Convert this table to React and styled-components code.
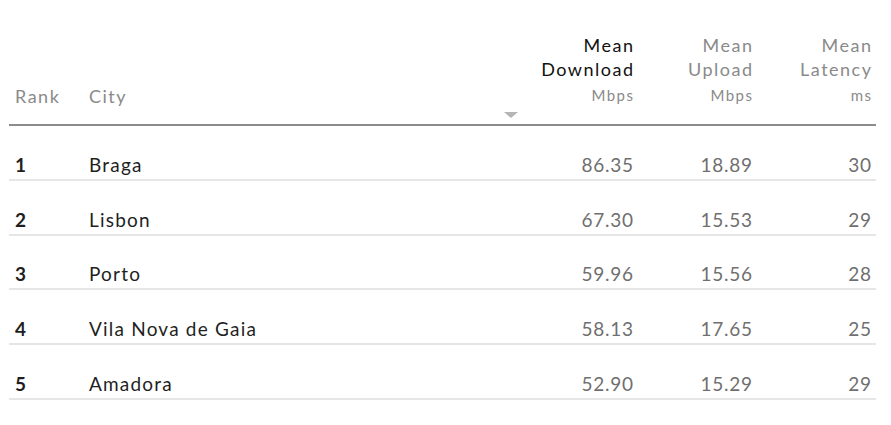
import React from "react";
import styled, { createGlobalStyle } from "styled-components";

const Global = createGlobalStyle`
  html, body { margin: 0; padding: 0; background: #fff; }
  body { font-family: Lato, "Noto Sans", sans-serif; }
`;

const Table = styled.div`
  margin: 0 0 0 9px;
  width: 867px;
  padding-top: 33px;
`;

const Grid = styled.div`
  display: grid;
  grid-template-columns: 80px 1fr 138px 119px 119px;
  align-items: end;
`;

const HeadRow = styled(Grid)`
  border-bottom: 2px solid #8c8c8c;
  padding-bottom: 6px;
`;

const HeadCell = styled.div`
  padding: 0 ${(p) => (p.$right ? "5px" : "0")} 0 ${(p) => (p.$pad ? "6px" : "0")};
  display: flex;
  flex-direction: column;
  align-items: ${(p) => (p.$right ? "flex-end" : "flex-start")};
  text-align: ${(p) => (p.$right ? "right" : "left")};
  color: ${(p) => (p.$active ? "#111" : "#8a8a8a")};
  font-size: 18px;
  line-height: 24px;
  letter-spacing: 1.5px;
`;

const PlainHead = styled(HeadCell)`
  padding-bottom: 10px;
`;

const Title = styled.span`
  display: block;
  margin-right: -1.5px;
`;

const Unit = styled.span`
  display: block;
  font-size: 15px;
  line-height: 20px;
  margin-top: 4px;
  margin-right: -1.5px;
  color: #8a8a8a;
  letter-spacing: 1.5px;
`;

const SortArrow = styled.span`
  align-self: flex-start;
  margin-left: 4px;
  margin-top: 7px;
  width: 0;
  height: 0;
  border-left: 7px solid transparent;
  border-right: 7px solid transparent;
  border-top: 6px solid #b5b5b5;
  visibility: ${(p) => (p.$hidden ? "hidden" : "visible")};
`;

const Row = styled(Grid)`
  height: 54.8px;
  box-sizing: border-box;
  border-bottom: 2px solid #e6e6e6;
  padding-bottom: 2px;
`;

const Cell = styled.div`
  padding: 0 ${(p) => (p.$right ? "5px" : "0")} 0 ${(p) => (p.$pad ? "6px" : "0")};
  text-align: ${(p) => (p.$right ? "right" : "left")};
  font-size: 19px;
  line-height: 24px;
  color: ${(p) => (p.$muted ? "#6f6f6f" : "#1f1f1f")};
  font-weight: ${(p) => (p.$bold ? 700 : 400)};
  letter-spacing: ${(p) => (p.$right ? "0.7px" : "1.2px")};
  margin-right: ${(p) => (p.$right ? "-0.7px" : "0")};
`;

const rows = [
  [1, "Braga", "86.35", "18.89", "30"],
  [2, "Lisbon", "67.30", "15.53", "29"],
  [3, "Porto", "59.96", "15.56", "28"],
  [4, "Vila Nova de Gaia", "58.13", "17.65", "25"],
  [5, "Amadora", "52.90", "15.29", "29"],
];

export default function App() {
  return (
    <>
      <Global />
      <Table>
        <HeadRow>
          <PlainHead $pad>Rank</PlainHead>
          <PlainHead>City</PlainHead>
          <HeadCell $right $active>
            <Title>Mean</Title>
            <Title>Download</Title>
            <Unit>Mbps</Unit>
            <SortArrow />
          </HeadCell>
          <HeadCell $right>
            <Title>Mean</Title>
            <Title>Upload</Title>
            <Unit>Mbps</Unit>
            <SortArrow $hidden />
          </HeadCell>
          <HeadCell $right>
            <Title>Mean</Title>
            <Title>Latency</Title>
            <Unit>ms</Unit>
            <SortArrow $hidden />
          </HeadCell>
        </HeadRow>
        {rows.map(([rank, city, dl, ul, lat]) => (
          <Row key={rank}>
            <Cell $pad $bold>{rank}</Cell>
            <Cell>{city}</Cell>
            <Cell $right $muted>{dl}</Cell>
            <Cell $right $muted>{ul}</Cell>
            <Cell $right $muted>{lat}</Cell>
          </Row>
        ))}
      </Table>
    </>
  );
}
